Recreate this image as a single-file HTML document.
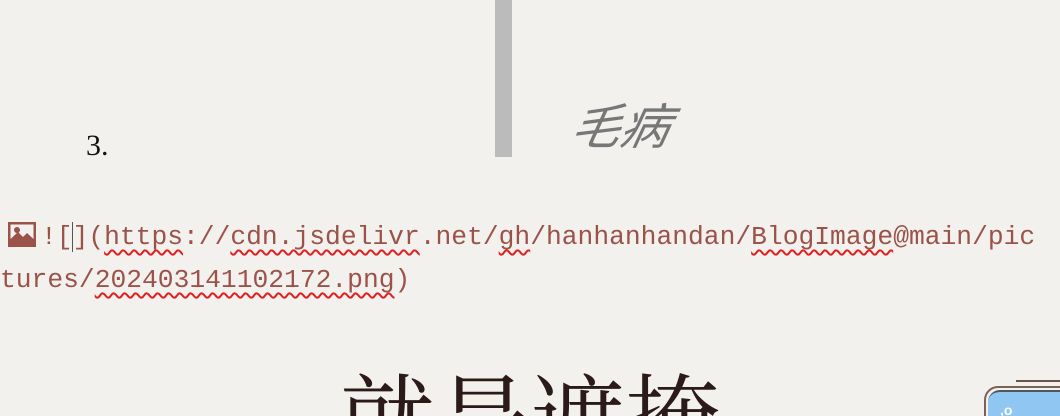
<!DOCTYPE html>
<html><head><meta charset="utf-8"><style>
html,body{margin:0;padding:0;width:1060px;height:416px;overflow:hidden;background:#f3f1ee}
.wrap{position:relative;width:1060px;height:416px;overflow:hidden}
.a{position:absolute;white-space:nowrap}
.code{font-family:"Liberation Mono",monospace;font-size:26.3px;color:#9b5249;}
.sq{text-decoration:underline wavy #e02020;text-decoration-thickness:1.5px;text-underline-offset:5px}
</style></head><body><div class="wrap">
<div class="a" style="left:495px;top:0;width:17px;height:157px;background:#bbbbbb"></div>
<div class="a" style="left:572px;top:104px;font:italic 49px/1 'Liberation Sans','Noto Sans CJK SC',sans-serif;color:#777;transform:skewX(-12deg)">毛病</div>
<div class="a" style="left:86px;top:131px;font:30px/1 'Liberation Serif',serif;color:#111">3.</div>
<svg class="a" style="left:8px;top:222px" width="28" height="25" viewBox="0 0 28 25"><rect x="0" y="0" width="28" height="25" fill="#9b5249"/><rect x="2.5" y="2.5" width="23" height="20" fill="#f3f1ee"/><path d="M2.5 22.5 L2.5 17 L10 10 L15 15 L19 11 L25.5 17 L25.5 22.5Z" fill="#9b5249"/><circle cx="9" cy="8" r="3" fill="#9b5249"/></svg>
<div class="a code" style="left:41px;top:216px;line-height:43px">![<span style="border-left:1px solid #555;margin-left:-1px"></span>](<span class="sq">https</span>://<span class="sq">cdn.jsdelivr</span>.net/<span class="sq">gh</span>/hanhanhandan/<span class="sq">BlogImage</span>@main/pic</div>
<div class="a code" style="left:0px;top:259px;line-height:43px">tures/<span class="sq">202403141102172.png</span>)</div>
<div class="a" style="left:340px;top:374px;font:95px/1 'Liberation Serif','Noto Serif CJK SC',serif;color:#2a1a1a">就是遮掩</div>
<div class="a" style="left:1016px;top:380px;width:44px;height:2px;background:#6b5448"></div>
<div class="a" style="left:984px;top:386px;width:90px;height:40px;border:2px solid #7a6258;border-radius:14px;background:#f3f1ee"></div>
<div class="a" style="left:988px;top:390px;width:90px;height:40px;border-radius:12px;background:#8fc7f2;border-top:2px solid #555"></div>
<div class="a" style="left:1000px;top:402px;font:bold 14px 'Liberation Sans',sans-serif;color:#fff">,o</div>
</div></body></html>
